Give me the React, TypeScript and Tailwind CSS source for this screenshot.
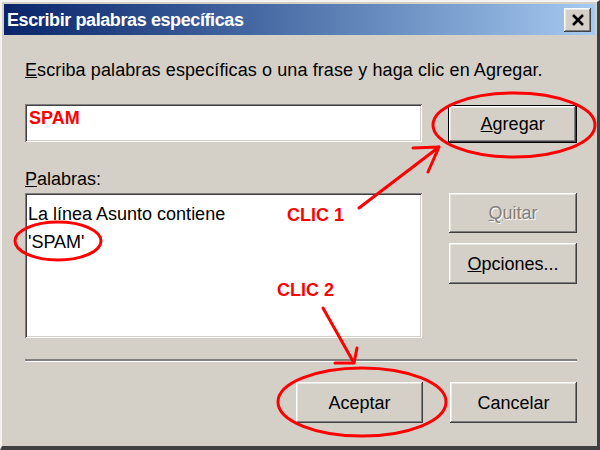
import React from "react";

const raised =
  "shadow-[inset_-1px_-1px_#404040,inset_1px_1px_#ffffff,inset_-2px_-2px_#808080,inset_2px_2px_#e8e6e1]";
const sunken =
  "shadow-[inset_1px_1px_#808080,inset_-1px_-1px_#ffffff,inset_2px_2px_#404040,inset_-2px_-2px_#d4d0c8]";

function Button({ children, className = "", isDefault = false }: { children: React.ReactNode; className?: string; isDefault?: boolean }) {
  return (
    <div
      className={`flex items-center justify-center bg-[#d4d0c8] text-[18px] leading-[20px] text-black ${
        isDefault ? "border border-black" : ""
      } ${raised} ${className}`}
    >
      {children}
    </div>
  );
}

export default function App() {
  return (
    <div className="relative w-[600px] h-[450px] font-['Liberation_Sans',Arial,sans-serif]">
      <div className="w-full h-full flex flex-col bg-[#d4d0c8] border-t-2 border-l-2 border-r-[3px] border-b-[4px] border-t-[#f4f3f0] border-l-[#f4f3f0] border-r-[#404040] border-b-[#404040] p-[2px]">
        {/* title bar */}
        <div className="h-[31px] flex items-center justify-between bg-gradient-to-r from-[#0a246a] to-[#a6caf0] pl-[3px] pr-[4px]">
          <span className="text-white font-bold text-[18px] leading-[20px] tracking-[-0.4px]">Escribir palabras específicas</span>
          <div className={`w-[27px] h-[24px] flex items-center justify-center bg-[#d4d0c8] ${raised}`}>
            <svg width="14" height="12" viewBox="0 0 14 12">
              <path d="M2 1 L12 11 M12 1 L2 11" stroke="#000" strokeWidth="2.6" />
            </svg>
          </div>
        </div>

        <div className="flex flex-col pl-[21px] pr-[18px]">
          <p className="mt-[25px] text-[18px] leading-[20px] tracking-[0.1px] text-black">
            <span className="underline">E</span>scriba palabras específicas o una frase y haga clic en Agregar.
          </p>

          <div className="mt-[24px] flex items-start gap-[26px]">
            <div className={`w-[398px] h-[38px] bg-white pl-[4px] pt-[3px] ${sunken}`}>
              <span className="text-[18px] leading-[20px] font-bold text-[#ff0000]">SPAM</span>
            </div>
            <Button isDefault className="w-[129px] h-[38px] mt-[1px]">
              <span>
                <span className="underline">A</span>gregar
              </span>
            </Button>
          </div>

          <div className="flex items-start gap-[27px]">
            <div className="flex flex-col">
              <p className="mt-[26px] text-[18px] leading-[20px] text-black">
                <span className="underline">P</span>alabras:
              </p>
              <div className={`mt-[4px] w-[397px] h-[145px] bg-white pl-[3px] pt-[7px] ${sunken}`}>
                <p className="text-[18px] leading-[28px] text-black">La línea Asunto contiene</p>
                <p className="text-[18px] leading-[28px] text-black">'SPAM'</p>
              </div>
            </div>
            <div className="flex flex-col gap-[10px] pt-[50px]">
              <Button className="w-[128px] h-[40px]">
                <span className="text-[#808080] [text-shadow:1px_1px_#ffffff]">
                  <span className="underline">Q</span>uitar
                </span>
              </Button>
              <Button className="w-[128px] h-[41px]">
                <span>
                  <span className="underline">O</span>pciones...
                </span>
              </Button>
            </div>
          </div>

          <div className="mt-[21px] border-t-2 border-t-[#808080] border-b border-b-white" />

          <div className="mt-[20px] flex justify-end gap-[27px]">
            <Button className="w-[127px] h-[41px]">Aceptar</Button>
            <Button className="w-[127px] h-[41px]">Cancelar</Button>
          </div>
        </div>
      </div>

      {/* red annotations over the dialog */}
      <svg className="absolute inset-0 pointer-events-none" width="600" height="450" viewBox="0 0 600 450">
        <g fill="none" stroke="#ff0000" strokeWidth="3" strokeLinecap="round">
          <ellipse cx="514" cy="125" rx="81" ry="32" />
          <ellipse cx="58" cy="241" rx="43" ry="19" />
          <ellipse cx="362" cy="402" rx="84" ry="34" />
          <path d="M359 208 L439 147 M439 147 L413 148 M439 147 L428 172" />
          <path d="M323 308 L354 363 M354 363 L335 363 M354 363 L357 348" />
        </g>
      </svg>
      <span className="absolute left-[287px] top-[206px] text-[18px] leading-[18px] font-bold text-[#ff0000]">CLIC 1</span>
      <span className="absolute left-[277px] top-[281px] text-[18px] leading-[18px] font-bold text-[#ff0000]">CLIC 2</span>
    </div>
  );
}
